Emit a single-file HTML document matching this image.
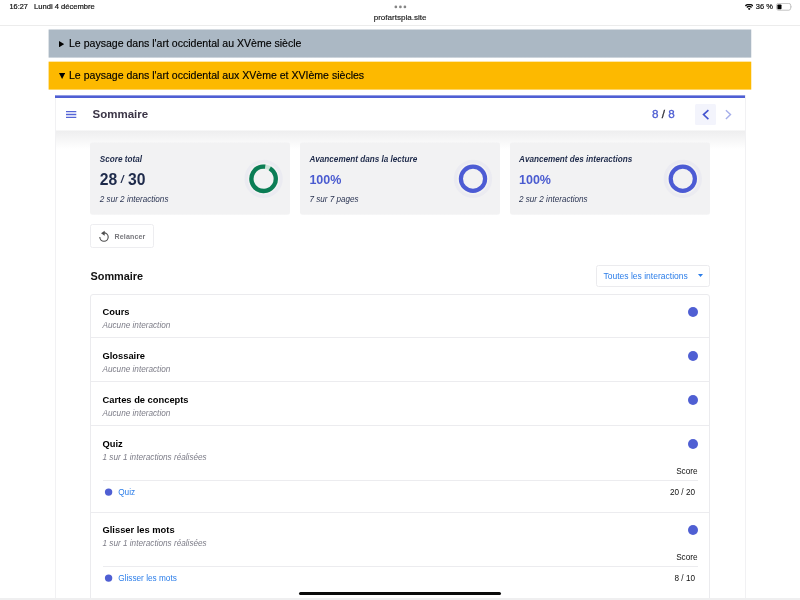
<!DOCTYPE html>
<html lang="fr"><head><meta charset="utf-8"><title>Sommaire</title>
<style>
*{box-sizing:border-box;margin:0;padding:0}
html,body{width:800px;height:600px;overflow:hidden;background:#fff;font-family:"Liberation Sans",sans-serif;color:#000}
body{position:relative;will-change:transform}
.abs{position:absolute;white-space:nowrap}
.status{font-size:7.5px;color:#111;line-height:10px;-webkit-text-stroke:.2px #111}
.bar{position:absolute;left:48px;width:704px;height:29px;font-size:10.55px;line-height:28px;padding-left:21px;color:#000;white-space:nowrap;-webkit-text-stroke:.15px #000}
.card{position:absolute;background:linear-gradient(rgba(242,242,243,.55) 0,rgba(242,242,243,.55) 1px,#f2f2f3 1px,#f2f2f3 72px,rgba(242,242,243,.7) 72px);border-radius:3px;height:73px;top:142px;width:200px}
.card .t{position:absolute;left:9.5px;top:12.6px;font-size:8.17px;line-height:10px;font-weight:bold;font-style:italic;color:#1e2a4a;white-space:nowrap}
.card .v{position:absolute;left:9.5px;top:30.6px;font-size:12.5px;line-height:14px;font-weight:bold;color:#4a5bd0;white-space:nowrap}
.card .s{position:absolute;left:9.5px;top:52.9px;font-size:8.15px;line-height:10px;font-style:italic;color:#2b3553;white-space:nowrap}
.hl{position:absolute;height:1px;background:#ececef}
.h{position:absolute;left:102.5px;font-size:9.33px;line-height:12px;font-weight:bold;color:#000;white-space:nowrap}
.sub{position:absolute;left:102.5px;font-size:8.2px;line-height:10px;font-style:italic;color:#7d7d88;white-space:nowrap}
.dot{position:absolute;left:688px;width:10px;height:10px;border-radius:50%;background:#4f5fd3}
.sd{position:absolute;left:105px;width:7.4px;height:7.4px;border-radius:50%;background:#4f5fd3}
.sm{position:absolute;font-size:8.18px;line-height:10px;color:#111;white-space:nowrap;text-align:right}
.lnk{position:absolute;left:118.2px;font-size:8.25px;line-height:10px;color:#2b7de9;white-space:nowrap}
</style></head><body>
<!-- status bar -->
<div class="abs status" style="left:9.5px;top:1.8px;font-size:7.35px">16:27</div>
<div class="abs status" style="left:34px;top:1.8px;font-size:7.6px">Lundi 4 décembre</div>
<svg class="abs" style="left:393px;top:5px" width="14" height="4" viewBox="0 0 14 4"><circle cx="2.85" cy="1.9" r="1.35" fill="#858585"/><circle cx="7.4" cy="1.9" r="1.35" fill="#858585"/><circle cx="11.9" cy="1.9" r="1.35" fill="#858585"/></svg>
<div class="abs" style="left:373.7px;top:12.5px;font-size:8.07px;line-height:10px;color:#1a1a1a;-webkit-text-stroke:.15px #1a1a1a">profartspla.site</div>
<svg class="abs" style="left:744.8px;top:3.8px" width="8.4" height="6.2" viewBox="0.2 1 17.6 13"><path d="M1 5 A11.5 11.5 0 0 1 17 5" fill="none" stroke="#111" stroke-width="3"/><path d="M4 8.2 A7.5 7.5 0 0 1 14 8.2" fill="none" stroke="#111" stroke-width="3"/><path d="M6.2 10.8 A3.8 3.8 0 0 1 11.8 10.8 L9 14 Z" fill="#111"/></svg>
<div class="abs status" style="left:755.8px;top:1.9px;font-size:7.5px">36 %</div>
<svg class="abs" style="left:775.6px;top:3.2px" width="16" height="7.6" viewBox="0 0 16 7.6"><rect x=".5" y=".4" width="14.2" height="6.8" rx="2" fill="none" stroke="#9a9a9a" stroke-width=".6"/><rect x="1.4" y="1.4" width="4.1" height="4.8" rx=".8" fill="#000"/><path d="M15.1 2.7 Q16 3.8 15.1 4.9Z" fill="#9a9a9a"/></svg>
<div class="abs" style="left:0;top:25px;width:800px;height:1px;background:#ececec"></div>
<!-- bars -->
<div class="bar" style="top:29px;background:linear-gradient(90deg,rgba(255,255,255,.6) 0,rgba(255,255,255,.6) 1px,transparent 1px,transparent 703px,rgba(255,255,255,.75) 703px),linear-gradient(rgba(171,184,196,.5) 0,rgba(171,184,196,.5) 1px,#abb8c4 1px,#abb8c4 28px,rgba(171,184,196,.6) 28px)"><svg style="position:absolute;left:11.1px;top:11.7px" width="5.2" height="6.3" viewBox="0 0 5.2 6.3"><path d="M0 0L5.2 3.15L0 6.3Z" fill="#000"/></svg>Le paysage dans l'art occidental au XVème siècle</div>
<div class="bar" style="top:61px;background:linear-gradient(90deg,rgba(255,255,255,.6) 0,rgba(255,255,255,.6) 1px,transparent 1px,transparent 703px,rgba(255,255,255,.75) 703px),linear-gradient(rgba(253,185,0,.35) 0,rgba(253,185,0,.35) 1px,#fdb900 1px,#fdb900 28px,rgba(253,185,0,.6) 28px)"><svg style="position:absolute;left:11.1px;top:11.7px" width="6.2" height="6" viewBox="0 0 6.2 6"><path d="M0 0H6.2L3.1 6Z" fill="#000"/></svg>Le paysage dans l'art occidental aux XVème et XVIème siècles</div>
<!-- main card -->
<div class="abs" style="left:55px;top:95px;width:691px;height:520px;background:#fff;border:1px solid #f1f1f3;border-top:none"></div>
<div class="abs" style="left:56px;top:130px;width:689px;height:19px;background:linear-gradient(#fff 0,#eeeeef 1px,#efeff0 2px,#fff 100%)"></div>
<div class="abs" style="left:55px;top:95px;width:690px;height:3px;background:linear-gradient(rgba(79,95,211,.62) 0,rgba(79,95,211,.62) 1px,#4f5fd3 1px)"></div>
<svg class="abs" style="left:66px;top:110px" width="11" height="9" viewBox="66 110 11 9"><path d="M66 111.6h10.3M66 114.45h10.3M66 117.3h10.3" stroke="#5565d6" stroke-width="1.35"/></svg>
<div class="abs" style="left:92.5px;top:107.1px;font-size:11.5px;line-height:14px;font-weight:bold;color:#3b3546">Sommaire</div>
<div class="abs" style="left:652px;top:107.4px;font-size:11.7px;line-height:14px;color:#4f5fd3;-webkit-text-stroke:.3px #4f5fd3">8 <span style="color:#2c2c34;-webkit-text-stroke:.3px #2c2c34">/</span> 8</div>
<div class="abs" style="left:694.6px;top:103.5px;width:21.6px;height:21.5px;background:#f3f4fc;border-radius:1.5px"></div>
<svg class="abs" style="left:700px;top:108px" width="34" height="13" viewBox="700 108 34 13"><path d="M708.4 110.1 L703.5 114.6 L708.4 119.1" fill="none" stroke="#4353cf" stroke-width="1.6"/><path d="M725.9 110.3 L730.5 114.6 L725.9 118.9" fill="none" stroke="#a5aeea" stroke-width="1.4"/></svg>
<!-- stats -->
<div class="card" style="left:90.3px"><div class="t">Score total</div><div class="v" style="color:#1e2a4a;font-size:15.7px;line-height:18px;top:28.1px">28<span style="font-size:10.5px;font-style:italic;vertical-align:2px;margin:0 4.5px 0 3.4px">/</span>30</div><div class="s">2 sur 2 interactions</div></div>
<div class="card" style="left:299.9px"><div class="t">Avancement dans la lecture</div><div class="v">100%</div><div class="s">7 sur 7 pages</div></div>
<div class="card" style="left:509.5px"><div class="t">Avancement des interactions</div><div class="v">100%</div><div class="s">2 sur 2 interactions</div></div>
<svg class="abs" style="left:240px;top:155px" width="470" height="48" viewBox="240 155 470 48">
<g fill="none"><circle cx="263.6" cy="178.8" r="17.5" stroke="#ebebf1" stroke-width="3.3"/><circle cx="263.6" cy="178.8" r="12.2" stroke="#c9e2d8" stroke-width="4.3"/><circle cx="263.6" cy="178.8" r="12.2" stroke="#0b7d55" stroke-width="4.3" stroke-dasharray="71.3 100" transform="rotate(-59.5 263.6 178.8)"/>
<circle cx="473" cy="178.8" r="17.5" stroke="#ebebf1" stroke-width="3.3"/><circle cx="473" cy="178.8" r="12.1" stroke="#4c5bd4" stroke-width="4.2"/>
<circle cx="682.8" cy="178.8" r="17.5" stroke="#ebebf1" stroke-width="3.3"/><circle cx="682.8" cy="178.8" r="12.1" stroke="#4c5bd4" stroke-width="4.2"/></g></svg>
<!-- relancer -->
<div class="abs" style="left:90px;top:224px;width:63.5px;height:24px;border:1px solid #ededf0;border-radius:2.5px;background:#fff"></div>
<svg class="abs" style="left:98px;top:229px" width="12" height="14" viewBox="98 229 12 14"><path d="M104 232.9 A4.2 4.2 0 1 1 99.8 237.1" fill="none" stroke="#4d4d4d" stroke-width="1.1"/><path d="M104.7 230.8V235.7L101 233.25Z" fill="#4d4d4d"/></svg>
<div class="abs" style="left:114.6px;top:232.2px;font-size:7.05px;letter-spacing:.12px;line-height:10px;font-weight:bold;color:#77777c">Relancer</div>
<!-- sommaire section -->
<div class="abs" style="left:90.5px;top:268.5px;font-size:10.9px;line-height:14px;font-weight:bold;color:#111">Sommaire</div>
<div class="abs" style="left:596px;top:265px;width:114px;height:22px;border:1px solid #ebebee;border-radius:2.5px;background:#fff"></div>
<div class="abs" style="left:603.5px;top:271px;font-size:8.53px;line-height:10px;color:#2b7de9">Toutes les interactions</div>
<svg class="abs" style="left:698px;top:274px" width="5" height="3" viewBox="0 0 5 3"><path d="M0 0H5L2.5 3Z" fill="#2b7de9"/></svg>
<!-- list -->
<div class="abs" style="left:90px;top:294px;width:620px;height:320px;border:1px solid #ebebee;border-radius:3px;background:#fff"></div>
<div class="h" style="top:305.5px">Cours</div><div class="sub" style="top:321.4px">Aucune interaction</div><div class="dot" style="top:307px"></div>
<div class="hl" style="left:91px;width:618px;top:337px"></div>
<div class="h" style="top:349.5px">Glossaire</div><div class="sub" style="top:365.4px">Aucune interaction</div><div class="dot" style="top:351px"></div>
<div class="hl" style="left:91px;width:618px;top:381px"></div>
<div class="h" style="top:393.5px">Cartes de concepts</div><div class="sub" style="top:409.4px">Aucune interaction</div><div class="dot" style="top:395px"></div>
<div class="hl" style="left:91px;width:618px;top:425px"></div>
<div class="h" style="top:437.5px">Quiz</div><div class="sub" style="top:453.4px">1 sur 1 interactions réalisées</div><div class="dot" style="top:439px"></div>
<div class="sm" style="right:102.5px;top:467.1px">Score</div>
<div class="hl" style="left:102.5px;width:595px;top:480px"></div>
<svg class="abs" style="left:104px;top:487px" width="10" height="10" viewBox="104 487 10 10"><circle cx="108.6" cy="492.1" r="3.7" fill="#4f5fd3"/></svg><div class="lnk" style="top:488.1px">Quiz</div><div class="sm" style="right:105px;top:488.1px">20 / 20</div>
<div class="hl" style="left:91px;width:618px;top:511.5px"></div>
<div class="h" style="top:523.5px">Glisser les mots</div><div class="sub" style="top:539.4px">1 sur 1 interactions réalisées</div><div class="dot" style="top:525px"></div>
<div class="sm" style="right:102.5px;top:553.1px">Score</div>
<div class="hl" style="left:102.5px;width:595px;top:565.6px"></div>
<svg class="abs" style="left:104px;top:573px" width="10" height="10" viewBox="104 573 10 10"><circle cx="108.6" cy="578.1" r="3.7" fill="#4f5fd3"/></svg><div class="lnk" style="top:574.1px">Glisser les mots</div><div class="sm" style="right:105px;top:574.1px">8 / 10</div>
<div class="hl" style="left:0;width:800px;top:598px;height:2px;background:#efeff0"></div>
<!-- home indicator -->
<div class="abs" style="left:299px;top:592px;width:202px;height:3.2px;border-radius:2px;background:#0a0a0a"></div>
</body></html>
